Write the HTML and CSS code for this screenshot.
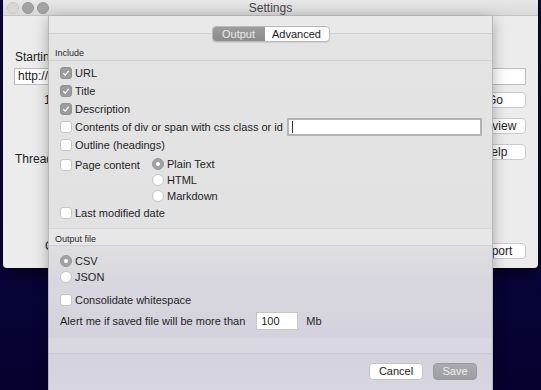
FILE: index.html
```html
<!DOCTYPE html>
<html lang="en">
<head>
    <meta charset="UTF-8">
    <title>Settings</title>
    <link rel="stylesheet" href="styles.css">
</head>
<body>
    <div class="desktop">
        <!-- main app window, mostly hidden by the sheet -->
        <div class="window">
            <div class="titlebar">
                <div class="lights">
                    <span class="light light-close"></span>
                    <span class="light"></span>
                    <span class="light"></span>
                </div>
                <div class="title">Settings</div>
                <div></div>
            </div>
            <div class="window-body">
                <div class="win-label clip">Starting URL</div>
                <div class="url-field"><span class="clip url-text">http://www.example.com/</span></div>
                <div class="win-row">
                    <span class="win-num clip">1000</span>
                    <span class="win-btn">Go</span>
                </div>
                <div class="win-row win-row-gap">
                    <span></span>
                    <span class="win-btn">Preview</span>
                </div>
                <div class="win-row win-row-gap">
                    <span class="win-label win-thread clip">Threads</span>
                    <span class="win-btn">Help</span>
                </div>
                <div class="win-row win-row-bottom">
                    <span class="win-open clip">Open</span>
                    <span class="win-btn">Export</span>
                </div>
            </div>
        </div>

        <!-- settings sheet -->
        <div class="sheet">
            <div class="sheet-head">
                <div class="segmented">
                    <span class="seg seg-on">Output</span>
                    <span class="seg">Advanced</span>
                </div>
            </div>

            <div class="group-head">Include</div>
            <div class="group-body include-body">
                <div class="row"><span class="check on"><svg viewBox="0 0 12 12"><path d="M2.8 6.3 L5 8.6 L9.3 3.4"/></svg></span>URL</div>
                <div class="row"><span class="check on"><svg viewBox="0 0 12 12"><path d="M2.8 6.3 L5 8.6 L9.3 3.4"/></svg></span>Title</div>
                <div class="row"><span class="check on"><svg viewBox="0 0 12 12"><path d="M2.8 6.3 L5 8.6 L9.3 3.4"/></svg></span>Description</div>
                <div class="row">
                    <span class="check"></span>Contents of div or span with css class or id
                    <span class="text-field"><span class="caret"></span></span>
                </div>
                <div class="row"><span class="check"></span>Outline (headings)</div>
                <div class="page-content">
                    <div class="row page-label"><span class="check"></span>Page content</div>
                    <div class="radios">
                        <div class="radio-row"><span class="radio on"></span>Plain Text</div>
                        <div class="radio-row"><span class="radio"></span>HTML</div>
                        <div class="radio-row"><span class="radio"></span>Markdown</div>
                    </div>
                </div>
                <div class="row"><span class="check"></span>Last modified date</div>
            </div>

            <div class="group-head output-head">Output file</div>
            <div class="group-body output-body">
                <div class="radio-row"><span class="radio on"></span>CSV</div>
                <div class="radio-row"><span class="radio"></span>JSON</div>
                <div class="row consolidate"><span class="check"></span>Consolidate whitespace</div>
                <div class="alert-row">
                    <span>Alert me if saved file will be more than</span>
                    <span class="num-field">100</span>
                    <span class="unit">Mb</span>
                </div>
            </div>

            <div class="band"></div>

            <div class="footer">
                <span class="btn">Cancel</span>
                <span class="btn btn-disabled">Save</span>
            </div>
        </div>
    </div>
</body>
</html>
```

FILE: styles.css
```css
* {
    box-sizing: border-box;
}

body {
    margin: 0;
    width: 541px;
    height: 390px;
    overflow: hidden;
    font-family: 'Liberation Sans', Arial, sans-serif;
    font-size: 11px;
    color: #1f1f1f;
}

.desktop {
    position: relative;
    width: 541px;
    height: 390px;
    background: linear-gradient(180deg, #0d0849 0%, #09053f 55%, #05022f 100%);
}

/* main window */
.window {
    position: absolute;
    left: 3px;
    top: 0;
    width: 535px;
    height: 268px;
    background: #ececec;
    border-radius: 0 0 4px 4px;
    box-shadow: 0 0 0 1px rgba(0,0,0,0.4), 0 6px 18px rgba(0,0,0,0.5);
}

.titlebar {
    height: 16px;
    display: grid;
    grid-template-columns: 1fr auto 1fr;
    align-items: center;
    background: linear-gradient(#e7e7e7, #d9d9d9);
    border-bottom: 1px solid #c4c4c4;
}

.lights {
    display: flex;
    gap: 3px;
    padding-left: 4px;
}

.light {
    width: 12px;
    height: 12px;
    border-radius: 50%;
    background: #a3a3a3;
    border: 1px solid #979797;
}

.light-close {
    background: #d7d7d7;
    border-color: #c6c6c6;
}

.title {
    font-size: 12px;
    color: #444;
}

.window-body {
    padding: 34px 12px 0 11px;
    font-size: 12px;
    color: #222;
}

/* text of the window that sits under the sheet is cut at the sheet edge */
.clip {
    display: block;
    overflow: hidden;
    white-space: nowrap;
}

.win-label {
    line-height: 14px;
    padding-left: 1px;
    width: 35px;
}

.url-field {
    margin-top: 4px;
    height: 17px;
    line-height: 15px;
    padding-left: 3px;
    background: #fff;
    border: 1px solid #bdbdbd;
}

.url-text {
    width: 31px;
}

.win-row {
    display: flex;
    justify-content: space-between;
    align-items: flex-start;
    margin-top: 7px;
}

.win-row-gap {
    margin-top: 10px;
}

.win-row-bottom {
    margin-top: 77px;
}

.win-num {
    margin-left: 30px;
    padding-top: 1px;
    width: 5px;
}

.win-thread {
    padding-top: 8px;
}

.win-open {
    margin-left: 31px;
    margin-top: -4px;
    width: 5px;
}

.win-btn {
    width: 62px;
    height: 16px;
    line-height: 14px;
    text-align: center;
    background: #fff;
    border: 1px solid #cacaca;
    border-radius: 4px;
}

/* sheet */
.sheet {
    position: absolute;
    left: 49px;
    top: 16px;
    width: 443px;
    height: 374px;
    background: linear-gradient(180deg, #e4e4e4 0px, #e2e2e2 212px, #d9d8df 262px, #d3d1dc 330px, #d7d5e0 374px);
    box-shadow: -1px 0 0 #b8b8b8, 1px 0 0 #b8b8b8, 0 4px 14px rgba(0,0,0,0.35);
}

.sheet-head {
    height: 26px;
    padding-top: 10px;
    display: flex;
    justify-content: center;
    background: linear-gradient(#e9e9e9 0 17px, #d0d0d0 17px 18px, transparent 18px);
}

.segmented {
    display: flex;
    height: 16px;
    border: 1px solid #b9b9b9;
    border-radius: 4px;
    overflow: hidden;
    background: #fff;
    box-shadow: 0 1px 0 rgba(0,0,0,0.08);
}

.seg {
    line-height: 14px;
    width: 64px;
    text-align: center;
    color: #1a1a1a;
}

.seg-on {
    width: 52px;
    background: linear-gradient(#9c9c9c, #8b8b8b);
    color: #e9e9e9;
}

.group-head {
    height: 19px;
    padding: 6px 0 0 6px;
    font-size: 9px;
    line-height: 11px;
    color: #2a2a2a;
    border-bottom: 1px solid #d1d1d1;
}

.output-head {
    height: 18px;
    padding-top: 5px;
    border-top: 1px solid #d6d6d6;
    background: rgba(255,255,255,0.22);
}

.group-body {
    padding: 3px 10px 6px 11px;
}

.row {
    display: flex;
    align-items: center;
    height: 18px;
}

.check {
    flex: none;
    width: 12px;
    height: 12px;
    margin-right: 3px;
    background: #fff;
    border: 1px solid #c3c3c3;
    border-radius: 3px;
    display: flex;
    align-items: center;
    justify-content: center;
}

.check.on {
    background: #9c9c9c;
    border-color: #929292;
}

.check svg {
    width: 12px;
    height: 12px;
    fill: none;
    stroke: #fff;
    stroke-width: 1.5;
}

.text-field {
    margin-left: auto;
    width: 195px;
    height: 18px;
    background: #fff;
    border: 2px solid #b3b3b3;
    border-radius: 1px;
    display: flex;
    align-items: center;
    padding-left: 3px;
}

.caret {
    width: 1px;
    height: 12px;
    background: #333;
}

.page-content {
    display: flex;
    margin-top: 2px;
}

.page-label {
    width: 92px;
}

.radio-row {
    display: flex;
    align-items: center;
    height: 16px;
}

.radio {
    flex: none;
    width: 12px;
    height: 12px;
    margin-right: 3px;
    border-radius: 50%;
    background: #fff;
    border: 1px solid #c3c3c3;
    display: flex;
    align-items: center;
    justify-content: center;
}

.radio.on {
    background: #a2a2a2;
    border-color: #979797;
}

.radio.on::after {
    content: '';
    width: 4px;
    height: 4px;
    border-radius: 50%;
    background: #fff;
}

.output-body {
    padding-top: 7px;
    padding-bottom: 7px;
}

.consolidate {
    margin-top: 6px;
}

.alert-row {
    display: flex;
    align-items: center;
    height: 20px;
    margin-top: 2px;
}

.num-field {
    width: 42px;
    height: 18px;
    margin-left: 11px;
    padding-left: 4px;
    line-height: 16px;
    background: #fff;
    border: 1px solid #c6c6c6;
}

.unit {
    margin-left: 8px;
}

.band {
    height: 16px;
    background: rgba(255,255,255,0.14);
    border-bottom: 1px solid #c9c7d1;
}

.footer {
    display: flex;
    justify-content: flex-end;
    gap: 10px;
    padding: 9px 15px 0 0;
}

.btn {
    height: 17px;
    line-height: 15px;
    text-align: center;
    background: #fff;
    border: 1px solid #c4c4c4;
    border-radius: 4px;
    width: 54px;
    color: #1a1a1a;
}

.btn-disabled {
    width: 44px;
    background: linear-gradient(#aaaab0, #9d9da4);
    border-color: #9a9aa0;
    color: #ededed;
}
```
